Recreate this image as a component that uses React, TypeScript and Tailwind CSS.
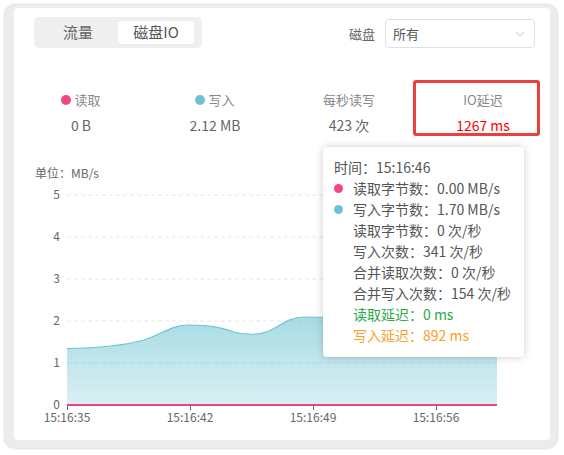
import React from "react";

const FONT = { fontFamily: '"Microsoft YaHei", "Noto Sans CJK SC", "Noto Sans", sans-serif' };

const stats = [
  { label: "读取", value: "0 B", dot: "bg-[#f2487d]" },
  { label: "写入", value: "2.12 MB", dot: "bg-[#6ec3d3]" },
  { label: "每秒读写", value: "423 次" },
  { label: "IO延迟", value: "1267 ms", alert: true },
];

const tooltipRows: { text: string; dot?: string; color?: string }[] = [
  { text: "读取字节数：0.00 MB/s", dot: "bg-[#f2487d]" },
  { text: "写入字节数：1.70 MB/s", dot: "bg-[#6ec3d3]" },
  { text: "读取字节数：0 次/秒" },
  { text: "写入次数：341 次/秒" },
  { text: "合并读取次数：0 次/秒" },
  { text: "合并写入次数：154 次/秒" },
  { text: "读取延迟：0 ms", color: "text-[#2aa84a]" },
  { text: "写入延迟：892 ms", color: "text-[#f7a128]" },
];

function Chart() {
  const yTicks = [0, 1, 2, 3, 4, 5];
  const xTicks = [
    { x: 53, label: "15:16:35" },
    { x: 176, label: "15:16:42" },
    { x: 299, label: "15:16:49" },
    { x: 422, label: "15:16:56" },
  ];
  const line =
    "M53,167.5 C90,167 112,164 130,159 C148,153 158,144 175,144 C195,144 205,146 220,151 C232,154 245,154 255,150 C268,144 275,136 290,136 C310,136 330,137 350,138 C390,140 440,134 483,130";
  const area = line + " L483,224 L53,224 Z";

  return (
    <svg width="536" height="250" className="block">
      <defs>
        <linearGradient id="wfill" x1="0" y1="0" x2="0" y2="1">
          <stop offset="0%" stopColor="#6ec3d3" stopOpacity="0.62" />
          <stop offset="100%" stopColor="#6ec3d3" stopOpacity="0.26" />
        </linearGradient>
      </defs>
      {yTicks.map((v) => {
        const y = 224 - 42 * v;
        return (
          <g key={v}>
            {v > 0 && (
              <line x1="53" x2="483" y1={y} y2={y} stroke="#e6e6e6" strokeDasharray="4 3" />
            )}
            <text x="46" y={y + 3.5} textAnchor="end" fontSize="12" fill="#666" style={FONT}>
              {v}
            </text>
          </g>
        );
      })}
      <path d={area} fill="url(#wfill)" />
      <path d={line} fill="none" stroke="#6ec3d3" strokeWidth="1.2" />
      <line x1="53" x2="483" y1="224.5" y2="224.5" stroke="#666" />
      {xTicks.map((t) => (
        <g key={t.label}>
          <line x1={t.x + 0.5} x2={t.x + 0.5} y1="224" y2="229" stroke="#666" />
          <text x={t.x} y="240.5" textAnchor="middle" fontSize="12" fill="#666" style={FONT}>
            {t.label}
          </text>
        </g>
      ))}
      <line x1="53" x2="483" y1="224" y2="224" stroke="#e8467c" strokeWidth="2" />
    </svg>
  );
}

export default function App() {
  return (
    <div className="w-[564px] h-[455px] bg-white pl-[5px] pt-[5px]" style={FONT}>
      <div className="w-[552px] h-[443px] rounded-[10px] bg-[#ececec] pt-[3px] pl-[9px] pr-[7px] pb-[8px] shadow-[0_0_3px_rgba(0,0,0,0.28)]">
        <div className="relative w-[536px] h-[432px] bg-white rounded-[4px] flex flex-col overflow-hidden">
          {/* header */}
          <div className="flex items-center justify-between pl-[20px] pr-[15px] pt-[9px]">
            <div className="flex bg-[#efefef] rounded-[5px] p-[4px] h-[31px]">
              <div className="w-[80px] flex items-center justify-center text-[15px] text-[#666]">流量</div>
              <div className="w-[76px] flex items-center justify-center text-[15px] text-[#555] bg-white rounded-[4px]">
                磁盘IO
              </div>
              <div className="w-[4px]" />
            </div>
            <div className="flex items-center gap-[10px] mt-[2px]">
              <span className="text-[13px] text-[#666]">磁盘</span>
              <div className="w-[150px] h-[29px] border border-[#dcdfe6] rounded-[4px] flex items-center justify-between pl-[7px] pr-[9px]">
                <span className="text-[13px] text-[#555]">所有</span>
                <svg width="10" height="6" viewBox="0 0 10 6">
                  <path d="M1 1 L5 5 L9 1" fill="none" stroke="#c0c4cc" strokeWidth="1" />
                </svg>
              </div>
            </div>
          </div>

          {/* stats */}
          <div className="grid grid-cols-4 mt-[43px]">
            {stats.map((s) => (
              <div key={s.label} className="relative flex flex-col items-center">
                <div className="flex items-center gap-[3px] h-[18px] text-[13px] text-[#888]">
                  {s.dot && <span className={`w-[10px] h-[10px] rounded-full ${s.dot}`} />}
                  {s.label}
                </div>
                <div
                  className={`mt-[6px] h-[20px] leading-[20px] text-[14px] ${
                    s.alert ? "text-[#f00]" : "text-[#666]"
                  }`}
                >
                  {s.value}
                </div>
                {s.alert && (
                  <div className="absolute left-[-3px] top-[-11px] w-[127px] h-[56px] border-[3px] border-[#e8403f] rounded-[3px]" />
                )}
              </div>
            ))}
          </div>

          {/* chart */}
          <div className="mt-[30px] pl-[21px] text-[12px] leading-[16px] text-[#666]">单位：MB/s</div>
          <Chart />

          {/* tooltip */}
          <div className="absolute left-[309px] top-[139px] w-[201px] h-[210px] bg-white rounded-[4px] shadow-[0_0_8px_rgba(0,0,0,0.2)] pt-[10px] pl-[11px] text-[14px] leading-[21px] text-[#555]">
            <div>时间：15:16:46</div>
            {tooltipRows.map((r) => (
              <div key={r.text} className={`flex items-center ${r.color ?? ""}`}>
                {r.dot ? (
                  <span className={`w-[9px] h-[9px] rounded-full mr-[10px] ${r.dot}`} />
                ) : (
                  <span className="w-[19px]" />
                )}
                {r.text}
              </div>
            ))}
          </div>
        </div>
      </div>
    </div>
  );
}
